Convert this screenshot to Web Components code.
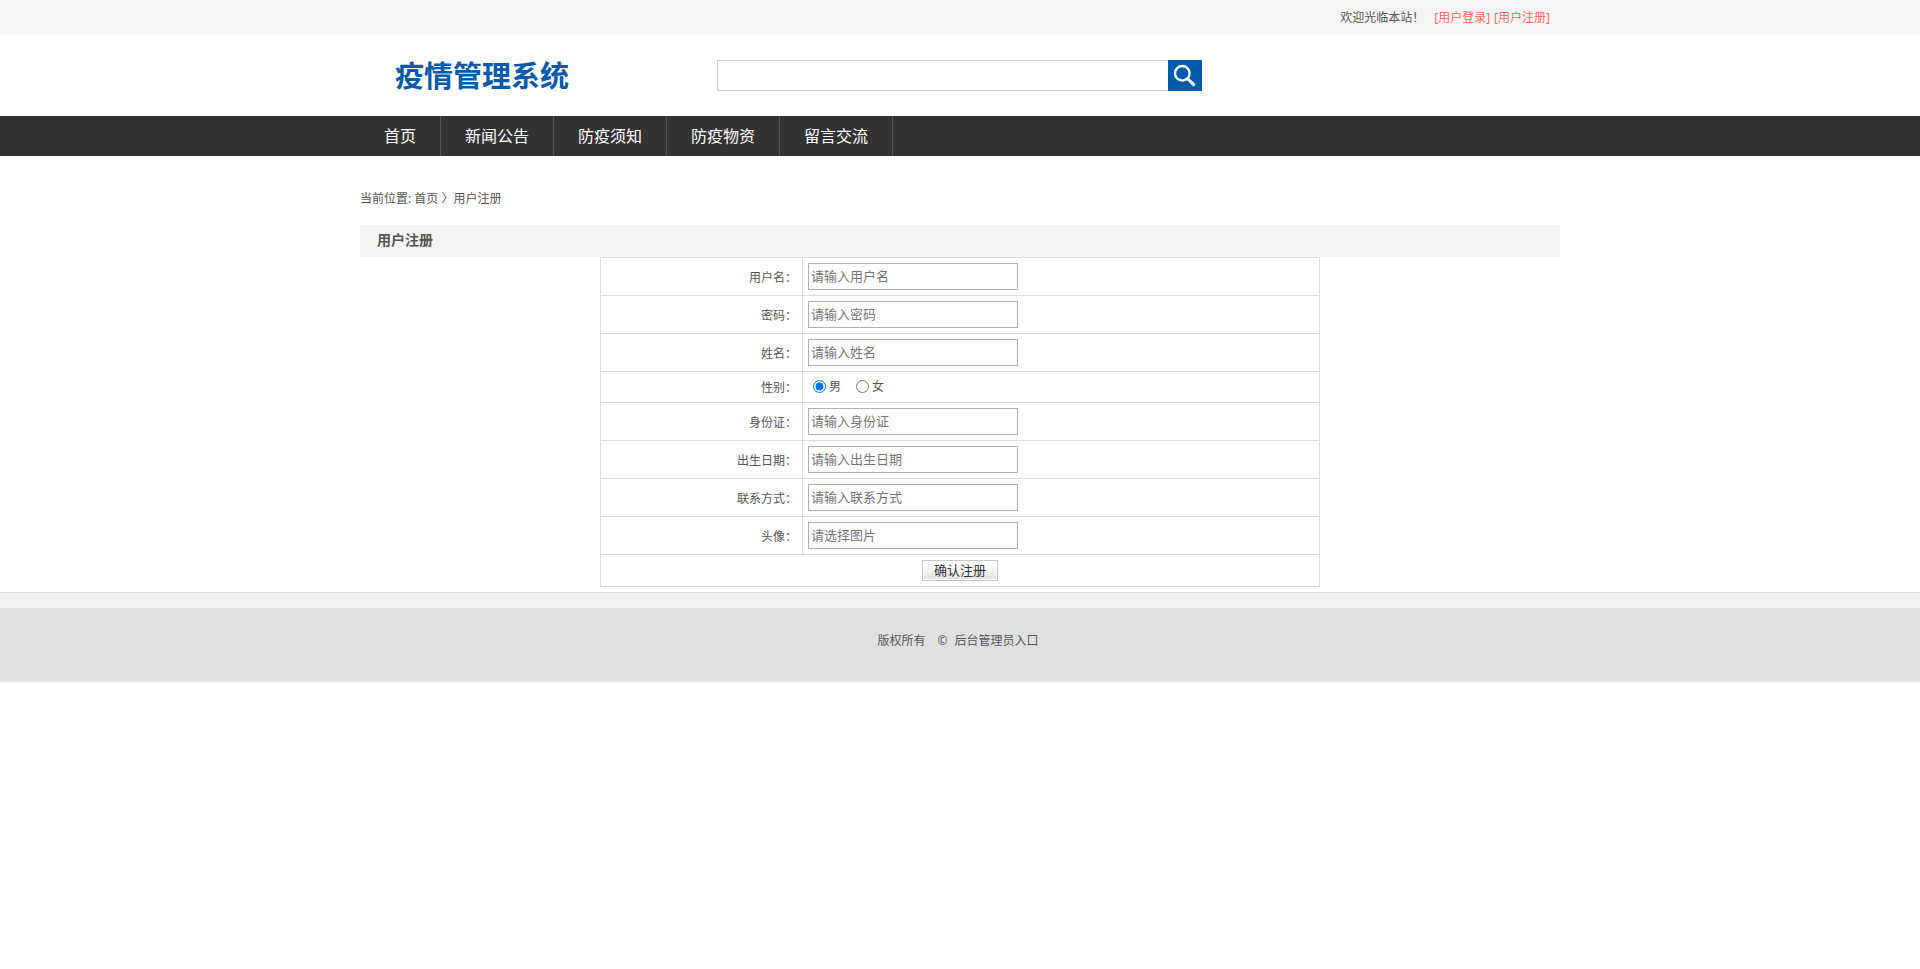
<!DOCTYPE html>
<html lang="zh-CN">
<head>
<meta charset="utf-8">
<meta name="viewport" content="width=device-width, initial-scale=1">
<title>用户注册</title>
<style>
  body {
    margin: 0;
    background: #FFFFFF;
    color: #555555;
    font-family: "Noto Sans", "Noto Sans CJK SC", sans-serif;
    font-size: 12px;
    line-height: 20px;
    --page-width: 1200px;
    --brand: #005AAB;
    --line: #DCDCDC;
  }
</style>
</head>
<body>
  <top-bar>
    欢迎光临本站！
    <a slot="links" href="#login">[用户登录]</a>
    <a slot="links" href="#register">[用户注册]</a>
  </top-bar>
  <site-header>疫情管理系统</site-header>
  <site-nav>
    <nav-item href="#home">首页</nav-item>
    <nav-item href="#news">新闻公告</nav-item>
    <nav-item href="#notice">防疫须知</nav-item>
    <nav-item href="#goods">防疫物资</nav-item>
    <nav-item href="#message">留言交流</nav-item>
  </site-nav>
  <page-section heading="用户注册">
    <register-form></register-form>
  </page-section>
  <site-footer></site-footer>

<script>
class TopBar extends HTMLElement {
  constructor() {
    super();
    this.attachShadow({ mode: 'open' });
    this.shadowRoot.innerHTML = `
      <style>
        :host {
          display: block;
          background: #F5F5F5;
        }

        .inner {
          display: flex;
          justify-content: flex-end;
          gap: 10px;
          box-sizing: border-box;
          max-width: var(--page-width);
          margin: 0 auto;
          padding: 2px 10px 0;
          line-height: 32px;
        }

        .links {
          display: flex;
          gap: 4px;
        }

        ::slotted(a) {
          color: #FF6666;
          text-decoration: none;
        }
      </style>
      <div class="inner">
        <span><slot></slot></span>
        <div class="links"><slot name="links"></slot></div>
      </div>
    `;
  }
}

class SiteHeader extends HTMLElement {
  constructor() {
    super();
    this.attachShadow({ mode: 'open' });
    this.shadowRoot.innerHTML = `
      <style>
        :host {
          display: block;
        }

        .inner {
          display: grid;
          grid-template-columns: 322px minmax(0, 485px);
          align-items: center;
          box-sizing: border-box;
          max-width: var(--page-width);
          margin: 0 auto;
          padding: 20px 35px;
        }

        h1 {
          margin: 0;
          padding-top: 2px;
          color: var(--brand);
          font-size: 29px;
          line-height: 40px;
        }

        form {
          display: flex;
          height: 31px;
        }

        input {
          flex: 1;
          min-width: 0;
          box-sizing: border-box;
          padding: 0 8px;
          border: 1px solid #CCCCCC;
          border-right: 0;
          outline: none;
          font: inherit;
        }

        button {
          width: 34px;
          padding: 0;
          border: 0;
          background: var(--brand);
          cursor: pointer;
        }

        svg {
          display: block;
        }
      </style>
      <header class="inner">
        <h1><slot></slot></h1>
        <form>
          <input type="text" aria-label="搜索">
          <button type="button" aria-label="搜索">
            <svg width="34" height="31" viewBox="0 0 34 31" fill="none" stroke="#FFFFFF">
              <circle cx="14.3" cy="13.3" r="7.3" stroke-width="2.4"/>
              <path d="M19.6 18.6 L25.8 24.6" stroke-width="3" stroke-linecap="round"/>
            </svg>
          </button>
        </form>
      </header>
    `;
  }
}

class SiteNav extends HTMLElement {
  constructor() {
    super();
    this.attachShadow({ mode: 'open' });
    this.shadowRoot.innerHTML = `
      <style>
        :host {
          display: block;
          background: #333333;
        }

        nav {
          display: flex;
          max-width: var(--page-width);
          margin: 0 auto;
        }
      </style>
      <nav><slot></slot></nav>
    `;
  }
}

class NavItem extends HTMLElement {
  constructor() {
    super();
    this.attachShadow({ mode: 'open' });
    const href = this.getAttribute('href') || '#';
    this.shadowRoot.innerHTML = `
      <style>
        :host {
          display: block;
          border-right: 1px solid #555555;
        }

        a {
          display: block;
          padding: 0 24px;
          color: #FFFFFF;
          font-size: 16px;
          line-height: 40px;
          text-decoration: none;
        }

        a:hover {
          background: var(--brand);
        }
      </style>
      <a href="${href}"><slot></slot></a>
    `;
  }
}

class PageSection extends HTMLElement {
  constructor() {
    super();
    this.attachShadow({ mode: 'open' });
    const heading = this.getAttribute('heading') || '';
    this.shadowRoot.innerHTML = `
      <style>
        :host {
          display: block;
          max-width: var(--page-width);
          margin: 0 auto;
          padding: 33px 0 5px;
        }

        .crumbs {
          padding: 0 0 16px;
        }

        .crumbs a {
          color: inherit;
          text-decoration: none;
        }

        h2 {
          margin: 0;
          padding: 0 17px 2px;
          background: #F4F4F4;
          font-size: 14px;
          line-height: 30px;
        }
      </style>
      <div class="crumbs">当前位置: <a href="#home">首页</a> 〉${heading}</div>
      <h2>${heading}</h2>
      <slot></slot>
    `;
  }
}

const fields = [
  { id: 'username', label: '用户名', hint: '请输入用户名' },
  { id: 'password', label: '密码', hint: '请输入密码', type: 'password' },
  { id: 'realname', label: '姓名', hint: '请输入姓名' },
  { id: 'gender', label: '性别', options: ['男', '女'] },
  { id: 'idcard', label: '身份证', hint: '请输入身份证' },
  { id: 'birthday', label: '出生日期', hint: '请输入出生日期' },
  { id: 'contact', label: '联系方式', hint: '请输入联系方式' },
  { id: 'avatar', label: '头像', hint: '请选择图片' }
];

class RegisterForm extends HTMLElement {
  constructor() {
    super();
    this.attachShadow({ mode: 'open' });
    this.shadowRoot.innerHTML = `
      <style>
        :host {
          display: block;
        }

        table {
          width: 60%;
          margin: 0 auto;
          border-collapse: collapse;
          table-layout: fixed;
        }

        .name {
          width: 202px;
        }

        th, td {
          padding: 5px;
          border: 1px solid var(--line);
          font-weight: normal;
          text-align: left;
        }

        th {
          padding: 6px 5px 4px;
          text-align: right;
        }

        input[type="text"], input[type="password"] {
          display: block;
          box-sizing: border-box;
          width: 210px;
          max-width: 100%;
          height: 27px;
          padding: 0 2px 2px;
          border: 1px solid #B0B0B0;
          outline: none;
          font-family: inherit;
          font-size: 13px;
        }

        .options {
          display: flex;
          gap: 15px;
          padding: 0 5px;
        }

        .options label {
          display: flex;
          align-items: center;
          gap: 3px;
        }

        input[type="radio"] {
          width: 13px;
          height: 13px;
          margin: 0 0 2px;
        }

        .actions {
          text-align: center;
        }

        button {
          display: block;
          box-sizing: border-box;
          height: 21px;
          margin: 0 auto;
          padding: 0 11px;
          border: 1px solid #C8C8C8;
          background: linear-gradient(#FFFFFF 20%, #E2E2E2);
          box-shadow: inset 0 0 0 1px #FFFFFF;
          color: #333333;
          font-family: inherit;
          font-size: 13px;
          line-height: 19px;
          cursor: pointer;
        }
      </style>
      <form>
        <table>
          <colgroup><col class="name"><col></colgroup>
          <tbody>
            ${fields.map((field) => this.row(field)).join('')}
            <tr><td class="actions" colspan="2"><button type="button">确认注册</button></td></tr>
          </tbody>
        </table>
      </form>
    `;
  }

  row(field) {
    if (field.options) {
      const radios = field.options.map((text, i) => `
        <label><input type="radio" name="${field.id}" value="${text}"${i === 0 ? ' checked' : ''}>${text}</label>
      `).join('');
      return `
        <tr>
          <th id="${field.id}">${field.label}：</th>
          <td><div class="options" role="radiogroup" aria-labelledby="${field.id}">${radios}</div></td>
        </tr>
      `;
    }
    return `
      <tr>
        <th><label for="${field.id}">${field.label}：</label></th>
        <td><input type="${field.type || 'text'}" id="${field.id}" placeholder="${field.hint}"></td>
      </tr>
    `;
  }
}

class SiteFooter extends HTMLElement {
  constructor() {
    super();
    this.attachShadow({ mode: 'open' });
    this.shadowRoot.innerHTML = `
      <style>
        :host {
          display: block;
          border-top: 1px solid var(--line);
          background: #F1F1F1;
          padding-top: 15px;
        }

        footer {
          display: flex;
          justify-content: center;
          padding: 23px 4px 31px 0;
          background: #E0E0E0;
        }

        .copy {
          margin: 0 7px 0 12px;
        }

        a {
          color: inherit;
          text-decoration: none;
        }
      </style>
      <footer>
        <span>版权所有</span>
        <span class="copy">©</span>
        <a href="#admin">后台管理员入口</a>
      </footer>
    `;
  }
}

customElements.define('top-bar', TopBar);
customElements.define('site-header', SiteHeader);
customElements.define('site-nav', SiteNav);
customElements.define('nav-item', NavItem);
customElements.define('page-section', PageSection);
customElements.define('register-form', RegisterForm);
customElements.define('site-footer', SiteFooter);
</script>
</body>
</html>
